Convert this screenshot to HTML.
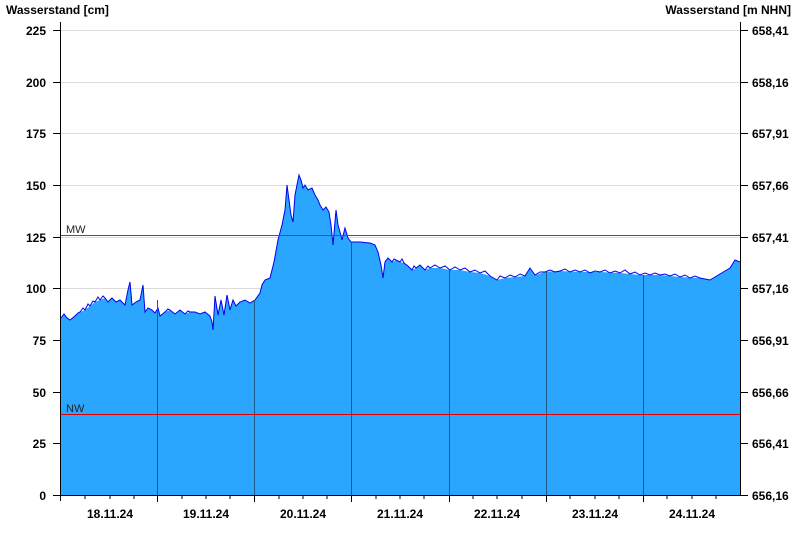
<!DOCTYPE html><html><head><style>body{margin:0;background:#fff}svg{display:block;font-family:"Liberation Sans",Arial,sans-serif}</style></head><body>
<svg width="800" height="550" viewBox="0 0 800 550" xmlns="http://www.w3.org/2000/svg">
<g stroke="#dcdcdc" stroke-width="1">
<line x1="61" x2="740" y1="30.5" y2="30.5"/><line x1="61" x2="740" y1="82.5" y2="82.5"/><line x1="61" x2="740" y1="133.5" y2="133.5"/><line x1="61" x2="740" y1="185.5" y2="185.5"/><line x1="61" x2="740" y1="237.5" y2="237.5"/><line x1="61" x2="740" y1="288.5" y2="288.5"/><line x1="61" x2="740" y1="340.5" y2="340.5"/><line x1="61" x2="740" y1="392.5" y2="392.5"/><line x1="61" x2="740" y1="443.5" y2="443.5"/>
</g>
<polygon fill="#2ba6fe" points="61,495 61,318 64,314 70,320 75,316 80,312 85,310 90,306 95,302 100,300 105,298 108,302 112,298 116,302 120,300 125,305 128,290 130,282 132,305 136,302 140,300 143,285 145,312 148,308 152,310 155,313 158,308 160,316 165,312 170,310 175,314 180,310 185,314 190,312 195,312 200,314 205,312 210,316 212,322 213,330 215,296 218,315 221,300 224,315 227,295 230,310 233,300 236,306 240,302 245,300 250,303 255,300 260,293 262,285 265,280 270,278 274,262 278,240 282,225 285,210 287,185 289,200 291,215 293,222 295,195 297,185 299,175 301,180 303,188 305,185 308,190 312,188 315,195 318,200 320,205 323,210 326,207 329,212 331,225 333,245 336,210 338,225 340,232 342,240 345,228 348,238 351,242 360,242 370,243 375,245 378,252 381,265 383,278 385,262 388,258 392,262 396,260 400,262 404,263 408,266 412,270 416,268 420,265 425,270 430,268 440,268 450,270 460,270 470,272 480,273 490,276 497,280 505,278 515,277 525,276 530,268 535,275 545,272 560,271 580,272 600,272 620,273 640,275 660,275 680,277 700,278 710,280 720,274 730,268 735,260 740,262 740,495"/>
<polyline fill="none" stroke="#0000ee" stroke-width="1" points="61,318 64,314 67,318 70,320 75,316 78,313 80,312 83,308 85,310 88,304 90,306 93,301 95,302 98,297 100,300 103,296 105,298 108,302 112,298 116,302 120,300 125,305 128,290 130,282 132,305 136,302 140,300 143,285 145,312 148,308 152,310 155,313 158,308 160,316 165,312 168,309 170,310 175,314 180,310 185,314 188,311 190,312 195,312 200,314 205,312 210,316 212,322 213,330 215,296 218,315 221,300 224,315 227,295 230,310 233,300 236,306 240,302 245,300 250,303 255,300 260,293 262,285 265,280 270,278 274,262 278,240 282,225 285,210 287,185 289,200 291,215 293,222 295,195 297,185 299,175 301,180 303,188 305,185 308,190 312,188 315,195 318,200 320,205 323,210 326,207 329,212 331,225 333,245 336,210 338,225 340,232 342,240 345,228 348,238 351,242 360,242 370,243 375,245 378,252 381,265 383,278 385,262 388,258 392,262 394,259 396,260 400,262 402,259 404,263 408,266 412,270 414,266 416,268 420,265 425,270 428,266 430,268 435,265 440,268 445,266 450,270 455,267 460,270 465,268 470,272 475,270 480,273 485,271 490,276 497,280 500,276 505,278 510,275 515,277 520,274 525,276 530,268 535,275 540,272 545,272 550,270 555,272 560,271 565,269 570,272 575,270 580,272 585,270 590,273 595,271 600,272 605,270 610,273 615,271 620,273 625,270 630,274 635,272 640,275 645,273 650,275 655,273 660,275 665,274 670,276 675,274 680,277 685,275 690,278 695,276 700,278 705,279 710,280 715,277 720,274 725,271 730,268 735,260 740,262"/>
<g stroke="#1c5a8a" stroke-width="1"><line x1="157.5" x2="157.5" y1="300" y2="495"/><line x1="254.5" x2="254.5" y1="300" y2="495"/><line x1="351.5" x2="351.5" y1="242" y2="495"/><line x1="449.5" x2="449.5" y1="270" y2="495"/><line x1="546.5" x2="546.5" y1="272" y2="495"/><line x1="643.5" x2="643.5" y1="275" y2="495"/></g>
<line x1="61" x2="740" y1="235.5" y2="235.5" stroke="#555" stroke-width="1"/>
<line x1="61" x2="740" y1="414.5" y2="414.5" stroke="#e00000" stroke-width="1"/>
<text x="66" y="233" font-size="11" fill="#222">MW</text>
<text x="66" y="412" font-size="11" fill="#222">NW</text>
<g stroke="#000" stroke-width="1">
<line x1="60.5" x2="60.5" y1="22" y2="501"/><line x1="740.5" x2="740.5" y1="22" y2="495"/><line x1="60" x2="741" y1="495.5" y2="495.5"/>
<path d="M53 30.5H61M53 82.5H61M53 133.5H61M53 185.5H61M53 237.5H61M53 288.5H61M53 340.5H61M53 392.5H61M53 443.5H61M53 495.5H61"/>
<path d="M740 30.5H748M740 82.5H748M740 133.5H748M740 185.5H748M740 237.5H748M740 288.5H748M740 340.5H748M740 392.5H748M740 443.5H748M740 495.5H748"/>
<path d="M157.5 495V502M254.5 495V502M351.5 495V502M449.5 495V502M546.5 495V502M643.5 495V502M85 495V499M110 495V499M134 495V499M182 495V499M206 495V499M230 495V499M279 495V499M303 495V499M327 495V499M376 495V499M400 495V499M424 495V499M473 495V499M497 495V499M522 495V499M570 495V499M595 495V499M619 495V499M667 495V499M692 495V499M716 495V499"/>
</g>
<g font-size="12" font-weight="bold" fill="#000">
<text x="6" y="14">Wasserstand [cm]</text>
<text x="791" y="14" text-anchor="end">Wasserstand [m NHN]</text>
<g text-anchor="end"><text x="46" y="35">225</text><text x="46" y="87">200</text><text x="46" y="138">175</text><text x="46" y="190">150</text><text x="46" y="242">125</text><text x="46" y="293">100</text><text x="46" y="345">75</text><text x="46" y="397">50</text><text x="46" y="448">25</text><text x="46" y="500">0</text></g>
<g><text x="752" y="35">658,41</text><text x="752" y="87">658,16</text><text x="752" y="138">657,91</text><text x="752" y="190">657,66</text><text x="752" y="242">657,41</text><text x="752" y="293">657,16</text><text x="752" y="345">656,91</text><text x="752" y="397">656,66</text><text x="752" y="448">656,41</text><text x="752" y="500">656,16</text></g>
<g text-anchor="middle"><text x="110" y="518">18.11.24</text><text x="206" y="518">19.11.24</text><text x="303" y="518">20.11.24</text><text x="400" y="518">21.11.24</text><text x="497" y="518">22.11.24</text><text x="595" y="518">23.11.24</text><text x="692" y="518">24.11.24</text></g>
</g>
</svg>
</body></html>
